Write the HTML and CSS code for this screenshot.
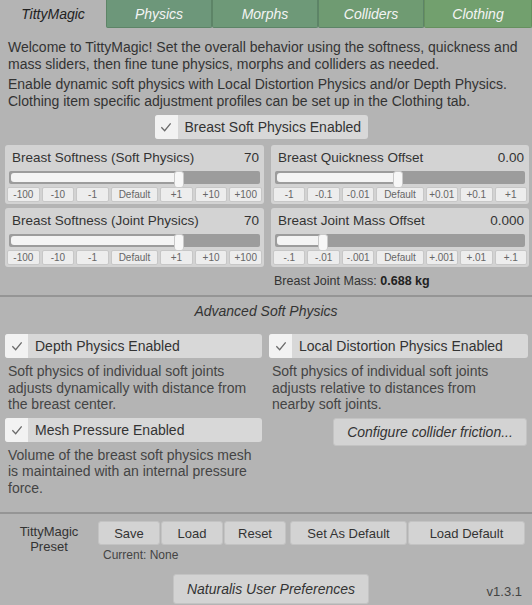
FILE: index.html
```html
<!DOCTYPE html>
<html>
<head>
<meta charset="utf-8">
<link rel="stylesheet" href="styles.css">
</head>
<body>
<div class="tabs">
  <div class="tab active">TittyMagic</div>
  <div class="tab g1">Physics</div>
  <div class="tab g2">Morphs</div>
  <div class="tab g3">Colliders</div>
  <div class="tab g4">Clothing</div>
</div>

<div class="intro">
  <p>Welcome to TittyMagic! Set the overall behavior using the softness, quickness and mass sliders, then fine tune physics, morphs and colliders as needed.</p>
  <p>Enable dynamic soft physics with Local Distortion Physics and/or Depth Physics. Clothing item specific adjustment profiles can be set up in the Clothing tab.</p>
</div>

<div class="center-row">
  <div class="toggle main-toggle">
    <span class="check"><svg viewBox="0 0 24 24" width="16" height="16"><path d="M5 12.5 L10 17.5 L19 6.5" fill="none" stroke="#6a6a6a" stroke-width="2"/></svg></span>
    <span class="toggle-label">Breast Soft Physics Enabled</span>
  </div>
</div>

<div class="sliders">
  <div class="panel">
    <div class="panel-head"><span>Breast Softness (Soft Physics)</span><span>70</span></div>
    <div class="track"><div class="fill" style="width:69%"></div></div>
    <div class="steps"><span>-100</span><span>-10</span><span>-1</span><span>Default</span><span>+1</span><span>+10</span><span>+100</span></div>
  </div>
  <div class="panel">
    <div class="panel-head"><span>Breast Quickness Offset</span><span>0.00</span></div>
    <div class="track"><div class="fill" style="width:50%"></div></div>
    <div class="steps"><span>-1</span><span>-0.1</span><span>-0.01</span><span>Default</span><span>+0.01</span><span>+0.1</span><span>+1</span></div>
  </div>
  <div class="panel">
    <div class="panel-head"><span>Breast Softness (Joint Physics)</span><span>70</span></div>
    <div class="track"><div class="fill" style="width:69%"></div></div>
    <div class="steps"><span>-100</span><span>-10</span><span>-1</span><span>Default</span><span>+1</span><span>+10</span><span>+100</span></div>
  </div>
  <div class="panel">
    <div class="panel-head"><span>Breast Joint Mass Offset</span><span>0.000</span></div>
    <div class="track"><div class="fill" style="width:19.5%"></div></div>
    <div class="steps"><span>-.1</span><span>-.01</span><span>-.001</span><span>Default</span><span>+.001</span><span>+.01</span><span>+.1</span></div>
  </div>
  <div></div>
  <div class="mass">Breast Joint Mass: <b>0.688 kg</b></div>
</div>

<div class="divider"></div>

<div class="adv-title">Advanced Soft Physics</div>

<div class="adv">
  <div class="col">
    <div class="toggle wide">
      <span class="check"><svg viewBox="0 0 24 24" width="16" height="16"><path d="M5 12.5 L10 17.5 L19 6.5" fill="none" stroke="#6a6a6a" stroke-width="2"/></svg></span>
      <span class="toggle-label">Depth Physics Enabled</span>
    </div>
    <p class="desc">Soft physics of individual soft joints adjusts dynamically with distance from the breast center.</p>
    <div class="toggle wide">
      <span class="check"><svg viewBox="0 0 24 24" width="16" height="16"><path d="M5 12.5 L10 17.5 L19 6.5" fill="none" stroke="#6a6a6a" stroke-width="2"/></svg></span>
      <span class="toggle-label">Mesh Pressure Enabled</span>
    </div>
    <p class="desc">Volume of the breast soft physics mesh is maintained with an internal pressure force.</p>
  </div>
  <div class="col">
    <div class="toggle wide">
      <span class="check"><svg viewBox="0 0 24 24" width="16" height="16"><path d="M5 12.5 L10 17.5 L19 6.5" fill="none" stroke="#6a6a6a" stroke-width="2"/></svg></span>
      <span class="toggle-label">Local Distortion Physics Enabled</span>
    </div>
    <p class="desc">Soft physics of individual soft joints adjusts relative to distances from<br>nearby soft joints.</p>
    <div class="btn-row-right">
      <div class="btn italic friction">Configure collider friction...</div>
    </div>
  </div>
</div>

<div class="divider bottom-div"></div>

<div class="preset">
  <div class="preset-label">TittyMagic<br>Preset</div>
  <div class="preset-main">
    <div class="preset-buttons">
      <div class="btn pb">Save</div>
      <div class="btn pb">Load</div>
      <div class="btn pb">Reset</div>
      <div class="btn pb wideb">Set As Default</div>
      <div class="btn pb wideb">Load Default</div>
    </div>
    <div class="current">Current: None</div>
  </div>
</div>

<div class="footer">
  <div class="btn italic prefs">Naturalis User Preferences</div>
  <div class="version">v1.3.1</div>
</div>
</body>
</html>
```
FILE: styles.css
```css
* { box-sizing: border-box; }
html, body { margin: 0; padding: 0; }
body {
  width: 532px;
  height: 605px;
  overflow: hidden;
  background: #b4b4b4;
  font-family: "Liberation Sans", Arial, sans-serif;
  color: #333;
}
.tabs {
  display: flex;
  height: 28px;
}
.tab {
  width: 106px;
  height: 28px;
  display: flex;
  align-items: center;
  justify-content: center;
  font-style: italic;
  font-size: 14px;
  color: #f4f4f4;
  border: 1px solid #5d8467;
  border-top: none;
  border-radius: 0 0 2px 2px;
}
.tab.active { color: #222; border: none; }
.tab.g4 { width: 108px; }
.g1 { background: #6d977a; }
.g2 { background: #6e9978; }
.g3 { background: #6f9b72; }
.g4 { background: #72a06e; border-color: #66905f; }

.intro { padding: 11px 8px 0 8px; }
.intro p {
  margin: 0 0 4px 0;
  font-size: 14px;
  line-height: 16.5px;
}

.center-row {
  display: flex;
  justify-content: center;
  margin-top: 6px;
  padding-right: 10px;
}
.toggle {
  display: flex;
  height: 24px;
  border-radius: 3px;
  overflow: hidden;
  background: #d8d8d8;
}
.main-toggle { width: 213px; }
.check {
  width: 23px;
  background: #f2f2f2;
  display: flex;
  align-items: center;
  justify-content: center;
}
.toggle-label {
  display: flex;
  align-items: center;
  padding-left: 7px;
  font-size: 14px;
  color: #333;
}

.sliders {
  display: grid;
  grid-template-columns: 259px 258px;
  column-gap: 7px;
  row-gap: 4px;
  padding: 6px 0 0 5px;
}
.panel {
  background: #d3d3d3;
  border-radius: 3px;
  padding: 4px 4px 3px 4px;
  height: 59px;
}
.panel-head {
  display: flex;
  justify-content: space-between;
  font-size: 13.5px;
  line-height: 17px;
  padding: 0 1px 0 3px;
  color: #333;
}
.track {
  margin-top: 5px;
  height: 13px;
  background: #9c9c9c;
  border-radius: 2px;
  padding: 2px;
  display: flex;
}
.fill {
  height: 9px;
  background: #f4f4f4;
  border-radius: 3px;
  position: relative;
}
.fill::after {
  content: "";
  position: absolute;
  right: -3px;
  top: -2px;
  width: 8px;
  height: 15px;
  background: #f7f7f7;
  border-radius: 3px;
  border: 1px solid #c9c9c9;
}
.steps {
  display: grid;
  grid-template-columns: 1fr 1fr 1fr 1.45fr 1fr 1fr 1fr;
  gap: 2px;
  margin-top: 3px;
  margin-left: -2px;
  margin-right: -2px;
}
.steps span {
  height: 15px;
  background: #ededed;
  border: 1px solid #c7c7c7;
  border-radius: 2px;
  font-size: 10px;
  color: #666;
  display: flex;
  align-items: center;
  justify-content: center;
}
.mass {
  font-size: 12.5px;
  padding: 3px 0 0 3px;
  color: #333;
}
.mass b { color: #222; }

.divider {
  height: 2px;
  background: #959595;
  margin-top: 7px;
}
.adv-title {
  text-align: center;
  font-style: italic;
  font-size: 14px;
  margin-top: 6px;
  line-height: 16px;
}

.adv {
  display: grid;
  grid-template-columns: 257px 259px;
  column-gap: 7px;
  padding: 15px 0 0 5px;
}
.desc {
  margin: 5px 0 0 3px;
  max-width: 249px;
  font-size: 14px;
  line-height: 16.5px;
  color: #444;
}
.col .desc + .toggle { margin-top: 5px; }
.btn-row-right {
  display: flex;
  justify-content: flex-end;
  margin-top: 5px;
}
.btn {
  background: #d3d3d3;
  border: 1px solid #c3c3c3;
  border-radius: 3px;
  display: flex;
  align-items: center;
  justify-content: center;
  color: #333;
}
.italic { font-style: italic; }
.friction {
  width: 194px;
  height: 28px;
  font-size: 14px;
  margin-right: 1px;
}

.bottom-div { margin-top: 16px; }

.preset {
  display: flex;
  padding-top: 7px;
}
.preset-label {
  width: 98px;
  text-align: center;
  font-size: 13px;
  line-height: 15px;
  padding-top: 3px;
  color: #333;
}
.preset-buttons {
  display: flex;
  gap: 1px;
}
.pb {
  width: 62px;
  height: 24px;
  font-size: 13px;
}
.pb.wideb { width: 117px; }
.preset-buttons .pb:nth-child(4) { margin-left: 3px; }
.current {
  font-size: 12px;
  color: #444;
  padding: 3px 0 0 5px;
}
.footer {
  display: flex;
  align-items: flex-end;
  padding-top: 12px;
}
.prefs {
  margin-left: 173px;
  width: 196px;
  height: 30px;
  font-size: 14px;
}
.version {
  margin-left: auto;
  margin-right: 10px;
  font-size: 13px;
  color: #444;
  padding-bottom: 5px;
}
```
